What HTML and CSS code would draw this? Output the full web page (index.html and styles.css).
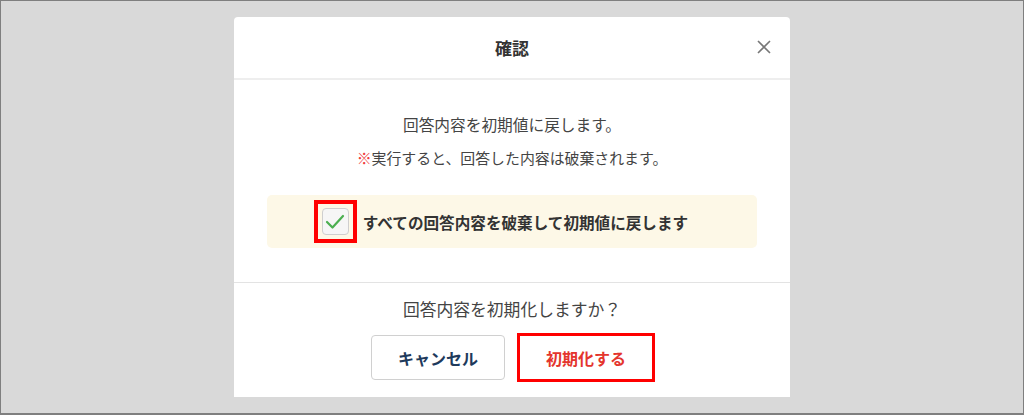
FILE: index.html
```html
<!DOCTYPE html>
<html lang="ja">
<head>
<meta charset="utf-8">
<title>確認</title>
<link rel="stylesheet" href="styles.css">
</head>
<body>
<div class="frame">
  <div class="modal">
    <div class="modal-header">
      <h1 class="title">確認</h1>
      <button class="close" aria-label="閉じる">
        <svg width="14" height="14" viewBox="0 0 14 14"><path d="M1 1L13 13M13 1L1 13" stroke="#777" stroke-width="1.6" fill="none"/></svg>
      </button>
    </div>
    <div class="modal-body">
      <p class="msg">回答内容を初期値に戻します。</p>
      <p class="msg note"><span class="mark">※</span>実行すると、回答した内容は破棄されます。</p>
      <div class="confirm-box">
        <span class="checkbox">
          <svg width="27" height="27" viewBox="0 0 27 27"><polyline points="5,14 10.5,19.5 21,8" fill="none" stroke="#4caf50" stroke-width="2.2" stroke-linecap="round" stroke-linejoin="round"/></svg>
        </span>
        <span class="confirm-label">すべての回答内容を破棄して初期値に戻します</span>
      </div>
    </div>
    <div class="modal-footer">
      <p class="question">回答内容を初期化しますか？</p>
      <div class="actions">
        <button class="btn btn-cancel">キャンセル</button>
        <button class="btn btn-reset">初期化する</button>
      </div>
    </div>
  </div>
</div>
</body>
</html>
```
FILE: styles.css
```css
html, body {
  margin: 0;
  padding: 0;
}
body {
  font-family: "Noto Sans CJK JP", "Noto Sans", sans-serif;
}
.frame {
  width: 1024px;
  height: 415px;
  box-sizing: border-box;
  border: 1px solid #7f7f7f;
  border-bottom-width: 2px;
  background: #d9d9d9;
  padding-top: 16px;
  display: flex;
  justify-content: center;
}
.modal {
  width: 556px;
  height: 380px;
  background: #fff;
  border-radius: 4px 4px 0 0;
  display: flex;
  flex-direction: column;
}
.modal-header {
  height: 61px;
  border-bottom: 2px solid #eeeeee;
  display: flex;
  align-items: center;
  justify-content: center;
  position: relative;
}
.title {
  margin: 0;
  font-size: 17px;
  font-weight: 700;
  color: #333;
  line-height: 24px;
}
.close {
  position: absolute;
  right: 19px;
  top: 23px;
  width: 14px;
  height: 14px;
  padding: 0;
  border: 0;
  background: none;
  display: flex;
}
.modal-body {
  height: 203px;
  box-sizing: border-box;
  border-bottom: 1px solid #e3e3e3;
  padding: 33px 33px 0;
  display: flex;
  flex-direction: column;
  align-items: center;
}
.msg {
  margin: 0;
  font-size: 15.7px;
  line-height: 24px;
  color: #444;
}
.note {
  margin-top: 9px;
  font-size: 14.9px;
}
.mark {
  color: #f03c3c;
  font-weight: 700;
}
.confirm-box {
  margin-top: 25px;
  align-self: stretch;
  height: 53px;
  background: #fdf8e7;
  border-radius: 5px;
  display: flex;
  align-items: center;
  justify-content: center;
  gap: 14px;
  padding-right: 14px;
}
.checkbox {
  position: relative;
  width: 27px;
  height: 27px;
  box-sizing: border-box;
  border: 1px solid #cfcfcf;
  border-radius: 4px;
  background: #f6f6f6;
  display: flex;
  align-items: center;
  justify-content: center;
}
.checkbox::after {
  content: "";
  position: absolute;
  left: -9px;
  top: -9px;
  right: -9px;
  bottom: -9px;
  border: 4px solid #ff0000;
}
.checkbox svg {
  flex: none;
}
.confirm-label {
  font-size: 15.6px;
  font-weight: 700;
  color: #333;
  line-height: 24px;
}
.modal-footer {
  flex: 1;
  display: flex;
  flex-direction: column;
  align-items: center;
  padding-top: 14px;
}
.question {
  margin: 0;
  font-size: 16.8px;
  line-height: 24px;
  color: #444;
}
.actions {
  margin-top: 14px;
  display: flex;
  gap: 14px;
}
.btn {
  position: relative;
  width: 134px;
  height: 45px;
  box-sizing: border-box;
  border: 1px solid #d0d0d0;
  border-radius: 4px;
  background: #fff;
  font-family: inherit;
  font-size: 16px;
  font-weight: 700;
  padding: 0;
}
.btn-cancel {
  color: #1e3a5c;
}
.btn-reset {
  color: #e4352d;
  border-color: #fff;
}
.btn-reset::after {
  content: "";
  position: absolute;
  left: -3px;
  top: -3px;
  right: -3px;
  bottom: -3px;
  border: 3px solid #ff0000;
}
```
